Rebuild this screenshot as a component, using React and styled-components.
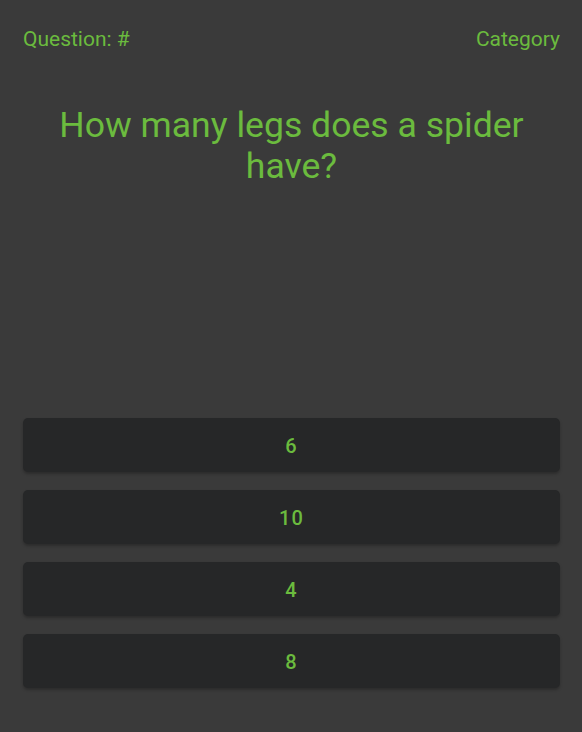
import React from "react";
import styled, { createGlobalStyle } from "styled-components";

const GlobalStyle = createGlobalStyle`
    html, body {
        margin: 0;
        padding: 0;
        background: #3a3a3a;
    }
    * {
        box-sizing: border-box;
    }
`;

const answers = ["6", "10", "4", "8"];

function App() {
    return (
        <>
            <GlobalStyle />
            <Container>
                <Header>
                    <HeaderText>Question: #</HeaderText>
                    <HeaderText>Category</HeaderText>
                </Header>
                <QuestionTitle>How many legs does a spider have?</QuestionTitle>
                <Answers>
                    {answers.map((answer) => (
                        <AnswerButton key={answer}>{answer}</AnswerButton>
                    ))}
                </Answers>
            </Container>
        </>
    );
}

export default App;

const Container = styled.div`
    display: flex;
    flex-direction: column;
    min-height: 100vh;
    padding: 0 22px 44px 23px;
    background: #3a3a3a;
    font-family: Roboto, "Liberation Sans", sans-serif;
    color: #6bbb3e;
`;

const Header = styled.div`
    display: flex;
    justify-content: space-between;
    align-items: center;
    height: 78px;
`;

const HeaderText = styled.span`
    font-size: 21px;
`;

const QuestionTitle = styled.h1`
    margin: 27px 10px 0;
    font-size: 35.6px;
    font-weight: 400;
    line-height: 41px;
    text-align: center;
`;

const Answers = styled.div`
    display: flex;
    flex-direction: column;
    gap: 18px;
    margin-top: auto;
`;

const AnswerButton = styled.button`
    height: 54px;
    padding: 2px 0 0;
    border: none;
    border-radius: 5px;
    background: #262728;
    color: #6bbb3e;
    font-family: Roboto, "Liberation Sans", sans-serif;
    font-size: 20px;
    font-weight: 500;
    letter-spacing: 1.2px;
    box-shadow: 0 2px 3px rgba(0, 0, 0, 0.25);
    cursor: pointer;
`;
